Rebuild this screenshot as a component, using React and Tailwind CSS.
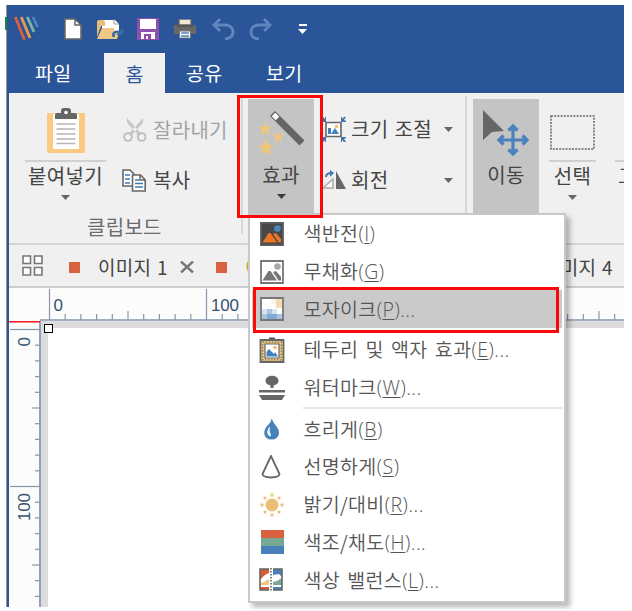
import React from "react";

const Caret = ({ className = "", color = "#666" }) => (
  <svg className={`shrink-0 ${className}`} width="9" height="5" viewBox="0 0 9 5">
    <path d="M0 0h9L4.500 5z" fill={color} />
  </svg>
);

const Logo = () => (
  <svg width="25" height="26" viewBox="0 0 25 26" className="shrink-0">
    <g fill="none" strokeWidth="2.800">
      <path d="M1.300 1L10.500 24" stroke="#d95f43" />
      <path d="M7.300 1L16 22" stroke="#eb9a4c" />
      <path d="M13.300 1L20 16" stroke="#83b3a2" />
      <path d="M19 1L23.500 11" stroke="#4c84c0" />
    </g>
  </svg>
);

const NewFile = () => (
  <svg width="18" height="22" viewBox="0 0 18 22" className="shrink-0">
    <path d="M1 1h10l6 6v14H1z" fill="#fff" stroke="#666" strokeWidth="1.500" />
    <path d="M11 1v6h6" fill="none" stroke="#666" strokeWidth="1.500" />
  </svg>
);

const OpenFile = () => (
  <svg width="27" height="22" viewBox="0 0 27 22" className="shrink-0">
    <path d="M5 2h13l4 4v8H5z" fill="#fff" />
    <path d="M0 3l2-1h5l1 2v4H4L0 19z" fill="#e8bd77" />
    <path d="M5 10h12v4l5 1-2 6H0z" fill="#f0c885" />
    <path d="M17 1v5h5" fill="none" stroke="#a49a85" />
    <path d="M17 19c-2-4 1-6 5-5" fill="none" stroke="#3a6ba5" strokeWidth="2.600" />
    <path d="M26 10v7h-7z" fill="#3a6ba5" />
  </svg>
);

const Save = () => (
  <svg width="22" height="22" viewBox="0 0 22 22" className="shrink-0">
    <path d="M0 0h22v22H0z" fill="#8e4fad" />
    <path d="M3 1h16v10H3zM4 14h14v7H4z" fill="#fff" />
    <path d="M7 16h7v5h-3v-3H9v3H7z" fill="#8e4fad" />
  </svg>
);

const Printer = () => (
  <svg width="22" height="20" viewBox="0 0 22 20" className="shrink-0">
    <path d="M5 0h12v6H5z" fill="#eee6d6" stroke="#666" strokeWidth="1.300" />
    <path d="M0 6h22v9H0z" fill="#686868" />
    <path d="M3 7h16" stroke="#444" />
    <path d="M5.500 12h11v7h-11z" fill="#fff" stroke="#777" />
    <path d="M7 14h8M7 17h8" stroke="#4b80b9" strokeWidth="1.300" />
  </svg>
);

const Undo = ({ flip = false }) => (
  <svg width="23" height="22" viewBox="0 0 23 22" className={flip ? "shrink-0 -scale-x-100" : "shrink-0"}>
    <path d="M8 1L2 7l6 6M2.500 7H13c5 0 8 3 8 7s-3 6.500-8 7" fill="none" stroke="#5f86bd" strokeWidth="2.800" />
  </svg>
);

const Clipboard = () => (
  <svg width="38" height="46" viewBox="0 0 38 46">
    <rect y="5" width="38" height="40" rx="1" fill="#fbca80" />
    <path d="M6 6h26v35H6z" fill="#fff" />
    <path d="M8 11V7q0-2 2-2h4V3q0-3 3-3h4q3 0 3 3v2h4q2 0 2 2v4z" fill="#666" />
    <circle cx="19" cy="4.500" r="1.800" fill="#fff" />
    <path d="M9.500 16h19M9.500 21h19M9.500 26h19M9.500 31h19M9.500 35.500h19" stroke="#b5b5b5" strokeWidth="1.400" />
  </svg>
);

const Scissors = () => (
  <svg width="24" height="24" viewBox="0 0 24 24" className="shrink-0">
    <path d="M4 0q-1 3 1 6l11 12 2.500-2zM20 0q1 3-1 6L8 18l-2.500-2z" fill="#c7c7c7" />
    <g fill="none" stroke="#bdbdbd" strokeWidth="1.900">
      <circle cx="5" cy="19" r="3.900" />
      <circle cx="18.700" cy="19" r="3.900" />
    </g>
  </svg>
);

const Copy = () => (
  <svg width="24" height="23" viewBox="0 0 24 23" className="shrink-0">
    <path d="M1 1h7l4 4v12H1z" fill="#fff" stroke="#666" strokeWidth="1.600" />
    <path d="M3 6h5M3 10h5M3 14h5" stroke="#3f79b5" strokeWidth="1.400" />
    <path d="M10.500 6h8l4.700 5v11H10.500z" fill="#fff" stroke="#666" strokeWidth="1.600" />
    <path d="M18 6v5h5" fill="none" stroke="#666" strokeWidth="1.500" />
    <path d="M13 11h4M13 14.500h8M13 18h8" stroke="#3f79b5" strokeWidth="1.400" />
  </svg>
);

const Wand = () => (
  <svg width="48" height="46" viewBox="0 0 48 46">
    <path d="M15.500 2.500L45 32" stroke="#656565" strokeWidth="7" />
    <path d="M16.500 3.500l4 4" stroke="#fff" strokeWidth="5" />
    <g fill="#efc67b">
      <path d="M8 11l1.800 4.700 5.200.3-4 3.300 1.400 5L8 21.500l-4.400 2.800L5 19.300 1 16l5.200-.3z" />
      <path d="M21 20l1.500 4 4.500.2-3.500 2.800 1.200 4.300-3.700-2.400-3.700 2.400 1.200-4.300-3.500-2.800 4.500-.2z" />
      <path d="M9 28l2.200 5.700 6.300.3-5 4 1.700 6.200L9 40.800l-5.200 3.400L5.500 38l-5-4 6.300-.3z" />
    </g>
  </svg>
);

const Resize = () => (
  <svg width="24" height="25" viewBox="0 0 24 25" className="shrink-0">
    <path d="M4 5.500h15v14H4z" fill="#fff" stroke="#666" strokeWidth="1.600" />
    <path d="M6 17v-6h3v6zM9 17l4-6 4 6z" fill="#4280bd" />
    <circle cx="14.500" cy="9.500" r="1.700" fill="#edbd6b" />
    <path d="M0 0h1l2 2V0h1v5H0V4l1-1zM19 0h1v2l2-2h2l-2 3 2 1v1h-5zM0 20h4v5H3v-2l-2 2H0l1-3-1-1zM19 20h5v1l-2 1 2 3h-2l-2-2v2h-1z" fill="#3974ad" />
  </svg>
);

const Rotate = () => (
  <svg width="24" height="20" viewBox="0 0 24 20" className="shrink-0">
    <path d="M1 18L11 9v9z" fill="#fff" stroke="#aaa" strokeWidth="1.500" />
    <path d="M14 1v18h10z" fill="#686868" />
    <path d="M4 7q0-4 6-4" fill="none" stroke="#3f79b5" strokeWidth="2" />
    <path d="M8 0l4 3-4 4z" fill="#3f79b5" />
  </svg>
);

const Move = () => (
  <svg width="46" height="46" viewBox="0 0 46 46">
    <path d="M0 0l21 21-12 1-9 8z" fill="#666" />
    <path d="M30 17v26M17 30h26" stroke="#4b81ba" strokeWidth="3.200" />
    <path d="M25.500 20.500l4.500-4.500 4.500 4.500M25.500 39.500l4.500 4.500 4.500-4.500M20.500 25.500L16 30l4.500 4.500M39.500 25.500L44 30l-4.500 4.500" fill="none" stroke="#4b81ba" strokeWidth="3.200" />
  </svg>
);

const Picture = ({ dark = false }) => (
  <svg width="24" height="24" viewBox="0 0 24 24">
    <path d="M1 1h22v22H1z" fill={dark ? "#484848" : "#fff"} stroke={dark ? "#5c5c5c" : "#777"} strokeWidth="1.800" />
    <path d="M2.500 20.500l6-9.500h2l6.500 9.500zM13 12l3-1 5 6v3.500h-2.500z" fill={dark ? "#ee7427" : "#757575"} />
    <circle cx="17.500" cy="6.500" r="3.300" fill={dark ? "#4b87c4" : "#aaa"} />
  </svg>
);

const Mosaic = () => (
  <svg width="24" height="24" viewBox="0 0 24 24">
    <path d="M1 1h22v22H1z" fill="#fff" stroke="#777" strokeWidth="1.800" />
    <path d="M11 2h5v5h-5z" fill="#fbf4e8" />
    <path d="M16 2h6v5h-6zM16 7h6v4h-6z" fill="#f4dcb2" />
    <path d="M2 12h5v5H2zM12 12h5v5h-5z" fill="#d5e2f0" />
    <path d="M7 12h5v5H7zM2 17h5v5H2zM17 17h5v5h-5z" fill="#a9c4e0" />
    <path d="M7 17h10v5H7z" fill="#7fa8d2" />
  </svg>
);

const Frame = () => (
  <svg width="26" height="26" viewBox="0 0 26 26">
    <path d="M10 1.500h6" stroke="#555" strokeWidth="2" />
    <path d="M1.500 3h23v22h-23z" fill="#f0c67c" stroke="#666" strokeWidth="1.800" />
    <path d="M3.700 5.200h18.600v17.600H3.700z" fill="none" stroke="#777" strokeWidth="1.200" strokeDasharray="1.500 1.500" />
    <path d="M6 7h14v14H6z" fill="#fff" stroke="#666" strokeWidth="1.200" />
    <path d="M7.500 19.500V15l2.500-3 3 3 2 2 1-2 3 4.500z" fill="#4080bd" />
    <circle cx="16" cy="10.500" r="1.800" fill="#edbd6b" />
  </svg>
);

const Stamp = () => (
  <svg width="26" height="26" viewBox="0 0 26 26">
    <ellipse cx="13" cy="5.700" rx="6.500" ry="5" fill="#666" />
    <path d="M11.500 9h3v4h-3zM0 15h26v2.500H0zM0 20h26l-3 5H3z" fill="#666" />
  </svg>
);

const Drop = () => (
  <svg width="18" height="24" viewBox="0 0 18 24">
    <path d="M9 1q0 3 4.500 8.500 3 3.500 2.500 7-1 6-7.500 6t-7.300-6Q1 12 5 8q3.500-3.500 4-7z" fill="#4781b9" />
    <path d="M7 9q-5 6-1 10 2 1 2-1-2-4-1-9z" fill="#e7f1fa" />
  </svg>
);

const Cone = () => (
  <svg width="20" height="24" viewBox="0 0 20 24" className="-ml-[3px]">
    <path d="M10 1L1.500 19q0 3 8.500 3.500 8.500-.5 8.500-3.500z" fill="#fff" stroke="#666" strokeWidth="1.800" />
  </svg>
);

const Sun = () => (
  <svg width="24" height="24" viewBox="0 0 24 24">
    <circle cx="12" cy="12" r="6.500" fill="#e9bf79" />
    <path d="M12 .5v3M12 20.500v3M.5 12h3M20.500 12h3M4 4l2 2M18 18l2 2M4 20l2-2M18 6l2-2" stroke="#efc67e" strokeWidth="2.800" />
  </svg>
);

const Saturation = () => (
  <svg width="23" height="24" viewBox="0 0 23 24">
    <path d="M0 0h23v8H0z" fill="#d96040" />
    <path d="M0 8h23v8H0z" fill="#78a995" />
    <path d="M0 16h23v8H0z" fill="#4a80b9" />
  </svg>
);

const Balance = () => (
  <svg width="24" height="24" viewBox="0 0 24 24" className="-ml-[2px]">
    <path d="M1 1h22v21H1z" fill="#fff" />
    <path d="M1 1h9v4Q6 6 2 11H1z" fill="#d55a38" />
    <path d="M1 15q5-1 9-4v6H1z" fill="#efc580" />
    <path d="M1 19h9v3H1z" fill="#d55a38" />
    <path d="M14 1h9v8l-3-3-6 1z" fill="#4a80b9" />
    <path d="M14 14q5-1 9-4v7h-9z" fill="#78a995" />
    <path d="M14 19h9v3h-9z" fill="#4a80b9" />
    <path d="M10 1H1v21h9M14 1h9v21h-9" fill="none" stroke="#666" strokeWidth="1.600" />
    <path d="M12 0v24" stroke="#555" strokeWidth="1.500" strokeDasharray="1.500 1.500" />
  </svg>
);

const MenuRow = ({ icon, label, hotkey, more, active = false, className = "" }) => (
  <div className={`flex h-[37.7px] items-center ${active ? "bg-[#cacaca]" : ""} ${className}`}>
    <div className="ml-[7px] flex w-[26px] shrink-0 justify-center">{icon}</div>
    <div className="ml-[18.500px] text-[19.5px] leading-[36px] font-[350] tracking-[0.35px] whitespace-nowrap text-[#555] [word-spacing:2.500px]">
      {label}
      <span className="font-['Open_Sans'] text-[19.5px] font-light tracking-[0.5px]">
        (<span className="underline decoration-1 underline-offset-2">{hotkey}</span>){more && "..."}
      </span>
    </div>
  </div>
);

const EffectsMenu = () => (
  <div className="absolute top-[213px] left-[248px] h-[390px] w-[318px] border-2 border-[#c8c8c8] bg-white px-[2px] shadow-[4px_4px_5px_rgba(0,0,0,0.28)]">
    <MenuRow icon={<Picture dark />} label="색반전" hotkey="I" />
    <MenuRow icon={<Picture />} label="무채화" hotkey="G" />
    <MenuRow icon={<Mosaic />} label="모자이크" hotkey="P" more active />
    <MenuRow className="mt-[3px]" icon={<Frame />} label="테두리 및 액자 효과" hotkey="E" more />
    <MenuRow icon={<Stamp />} label="워터마크" hotkey="W" more />
    <div className="mt-px mb-px ml-[51px] h-[2px] bg-[#e6e6e6]" />
    <MenuRow icon={<Drop />} label="흐리게" hotkey="B" />
    <MenuRow icon={<Cone />} label="선명하게" hotkey="S" />
    <MenuRow icon={<Sun />} label="밝기/대비" hotkey="R" more />
    <MenuRow icon={<Saturation />} label="색조/채도" hotkey="H" more />
    <MenuRow icon={<Balance />} label="색상 밸런스" hotkey="L" more />
  </div>
);

const STEP = 15.7;
const ticks = (count) =>
  Array.from({ length: count }, (_, i) => ({ at: i * STEP, size: i % 10 === 0 ? 30 : i % 5 === 0 ? 8 : 5 }));

const TopRuler = () => (
  <svg width="615" height="33" viewBox="0 0 615 33" className="block shrink-0">
    <path d="M0 0h615v33H0z" fill="#fcfcfc" />
    {ticks(37).map((t) => (
      <path key={t.at} d={`M${40.5 + t.at} ${31 - t.size}V32`} stroke="#8797ad" strokeWidth="1.200" />
    ))}
    <path d="M31 32h584" stroke="#8797ad" strokeWidth="1.600" />
    <g fill="#36506f" fontSize="17" fontFamily="Liberation Sans, sans-serif">
      <text x="44.500" y="23" textLength="9">0</text>
      <text x="202" y="23" textLength="28">100</text>
    </g>
  </svg>
);

const SideRuler = () => (
  <svg width="32" height="286" viewBox="0 0 32 286" className="block shrink-0">
    <path d="M0 0h32v286H0z" fill="#fcfcfc" />
    {ticks(18).map((t) => (
      <path key={t.at} d={`M${31 - t.size} ${8.5 + t.at}H31`} stroke="#8797ad" strokeWidth="1.200" />
    ))}
    <path d="M31 0v286" stroke="#8797ad" strokeWidth="1.800" />
    <path d="M0 .75h31" stroke="#f01818" strokeWidth="1.500" />
    <g fill="#36506f" fontSize="17" fontFamily="Liberation Sans, sans-serif">
      <text transform="translate(20.500 25.500) rotate(-90)" textLength="10">0</text>
      <text transform="translate(20.500 200) rotate(-90)" textLength="28">100</text>
    </g>
  </svg>
);

export default function App() {
  return (
    <div className="relative h-[611px] w-[632px] overflow-hidden bg-white pt-[5px] pl-[6px] font-['Noto_Sans_CJK_KR',sans-serif] text-[#444]">
      <div className="flex h-[602px] w-[618px] flex-col overflow-hidden border-l border-[#99958d]">
        <div className="flex h-[88px] shrink-0 flex-col bg-[#2a5699]">
          <div className="flex h-[48px] items-center">
            <div className="ml-[7px]"><Logo /></div>
            <div className="ml-[25px]"><NewFile /></div>
            <div className="ml-[15px]"><OpenFile /></div>
            <div className="ml-[13px]"><Save /></div>
            <div className="ml-[15px]"><Printer /></div>
            <div className="ml-[16px]"><Undo /></div>
            <div className="ml-[14px]"><Undo flip /></div>
            <div className="ml-[26px] flex flex-col items-center gap-[3px]">
              <div className="h-[2px] w-[8px] bg-white" />
              <Caret color="#fff" />
            </div>
          </div>
          <div className="flex h-[40px] items-center text-[19.5px] leading-[44px] tracking-[0.3px] text-white">
            <div className="w-[97px] pl-[28px]">파일</div>
            <div className="h-[40px] w-[61px] bg-[#f0f0f0] text-center leading-[42px] text-[#2a5699]">홈</div>
            <div className="w-[80px] pl-[21px]">공유</div>
            <div className="w-[80px] pl-[21px]">보기</div>
          </div>
        </div>

        <div className="flex min-h-0 grow flex-col border-l-2 border-[#2a5699]">
          <div className="flex h-[152px] shrink-0 border-b-2 border-[#d4d4d4] bg-[#f0f0f0] text-[20px] leading-[28px] tracking-[0.3px]">
            <div className="flex w-[232px] shrink-0 flex-col">
              <div className="flex h-[120px]">
                <div className="ml-[16px] flex w-[81px] shrink-0 flex-col items-center pt-[15px]">
                  <Clipboard />
                  <div className="mt-[6px] h-[2px] w-full bg-[#d0d0d0]" />
                  <div className="whitespace-nowrap">붙여넣기</div>
                  <Caret className="mt-[5px]" />
                </div>
                <div className="ml-[17px] flex flex-col pt-[23px]">
                  <div className="flex items-center gap-[6px] text-[#a3a3a3]"><Scissors />잘라내기</div>
                  <div className="mt-[22px] -ml-px flex items-center gap-[7px]"><Copy />복사</div>
                </div>
              </div>
              <div className="pl-[78px] text-[#6b6b6b]">클립보드</div>
            </div>
            <div className="mt-[5px] h-[136px] w-[2px] shrink-0 bg-[#d8d8d8]" />
            <div className="mt-[6px] ml-[5px] flex h-[120px] w-[66px] shrink-0 flex-col items-center bg-[#c4c4c4] pt-[12px]">
              <Wand />
              <div className="mt-[4px]">효과</div>
              <Caret className="mt-[5px]" color="#3c3c3c" />
            </div>
            <div className="ml-[8px] flex w-[132px] shrink-0 flex-col pt-[22px]">
              <div className="flex items-center">
                <Resize />
                <div className="ml-[5px] tracking-[0.4px] whitespace-nowrap [word-spacing:1px]">크기 조절</div>
                <Caret className="mr-px ml-auto" />
              </div>
              <div className="mt-[23px] flex items-center">
                <Rotate />
                <div className="ml-[5px]">회전</div>
                <Caret className="mr-px ml-auto" />
              </div>
            </div>
            <div className="mt-[3px] ml-[11px] h-[136px] w-[2px] shrink-0 bg-[#d8d8d8]" />
            <div className="mt-[6px] ml-[6px] flex h-[120px] w-[66px] shrink-0 flex-col items-center bg-[#c4c4c4] pt-[11px]">
              <Move />
              <div className="mt-[5px]">이동</div>
            </div>
            <div className="ml-[10px] flex w-[47px] shrink-0 flex-col items-center pt-[22px]">
              <svg width="45" height="35" viewBox="0 0 45 35">
                <path d="M1 1h43v33H1z" fill="none" stroke="#666" strokeWidth="1.500" strokeDasharray="2 1.200" />
              </svg>
              <div className="mt-[10px] h-[2px] w-full bg-[#d0d0d0]" />
              <div>선택</div>
              <Caret className="mt-[5px]" />
            </div>
            <div className="ml-[19px] w-[10px] overflow-hidden pt-[67px]">
              <div className="h-[2px] bg-[#d0d0d0]" />
              <div className="ml-[3px] whitespace-nowrap">그</div>
            </div>
          </div>

          <div className="flex h-[43px] shrink-0 items-center border-b-2 border-[#cdcdcd] bg-[#f0f0f0] text-[19px] leading-[40px] tracking-[0.3px] whitespace-nowrap [word-spacing:1px]">
            <svg width="21" height="21" viewBox="0 0 21 21" className="ml-[13px] shrink-0">
              <path d="M1 1h7.500v7.500H1zM12.500 1H20v7.500h-7.500zM1 12.500h7.500V20H1zM12.500 12.500H20V20h-7.500z" fill="#fff" stroke="#777" strokeWidth="1.600" />
            </svg>
            <div className="mt-[3px] ml-[26px] size-[11px] shrink-0 bg-[#da6140]" />
            <div className="mt-[2px] ml-[18px] w-[82px] shrink-0">이미지 1</div>
            <svg width="14" height="12" viewBox="0 0 14 12" className="mt-[3px] shrink-0">
              <path d="M1 .5l12 11M13 .5L1 11.500" stroke="#777" strokeWidth="2.400" />
            </svg>
            <div className="mt-[3px] ml-[22px] size-[11px] shrink-0 bg-[#da6140]" />
            <div className="mt-[2px] ml-[18px] w-[298px] shrink-0 text-[#d99b43]">이</div>
            <div className="mt-[2px]">이미지 4</div>
          </div>

          <div className="flex min-h-0 grow flex-col bg-white">
            <TopRuler />
            <div className="flex min-h-0 grow">
              <SideRuler />
              <div className="grow border-t-[7px] border-l-[7px] border-[#dcdcdc] bg-white" />
            </div>
          </div>
        </div>
      </div>

      <div className="absolute top-[17px] left-[5px] h-[13px] w-[2px] bg-[#168a3c]" />
      <div className="absolute top-[324px] left-[44px] size-[9px] border-[1.5px] border-black bg-white" />
      <EffectsMenu />
      <div className="absolute top-[95px] left-[237px] h-[123px] w-[86px] border-[3px] border-[#fb0808]" />
      <div className="absolute top-[287px] left-[253px] h-[46px] w-[306px] border-[3px] border-[#fb0808]" />
    </div>
  );
}
